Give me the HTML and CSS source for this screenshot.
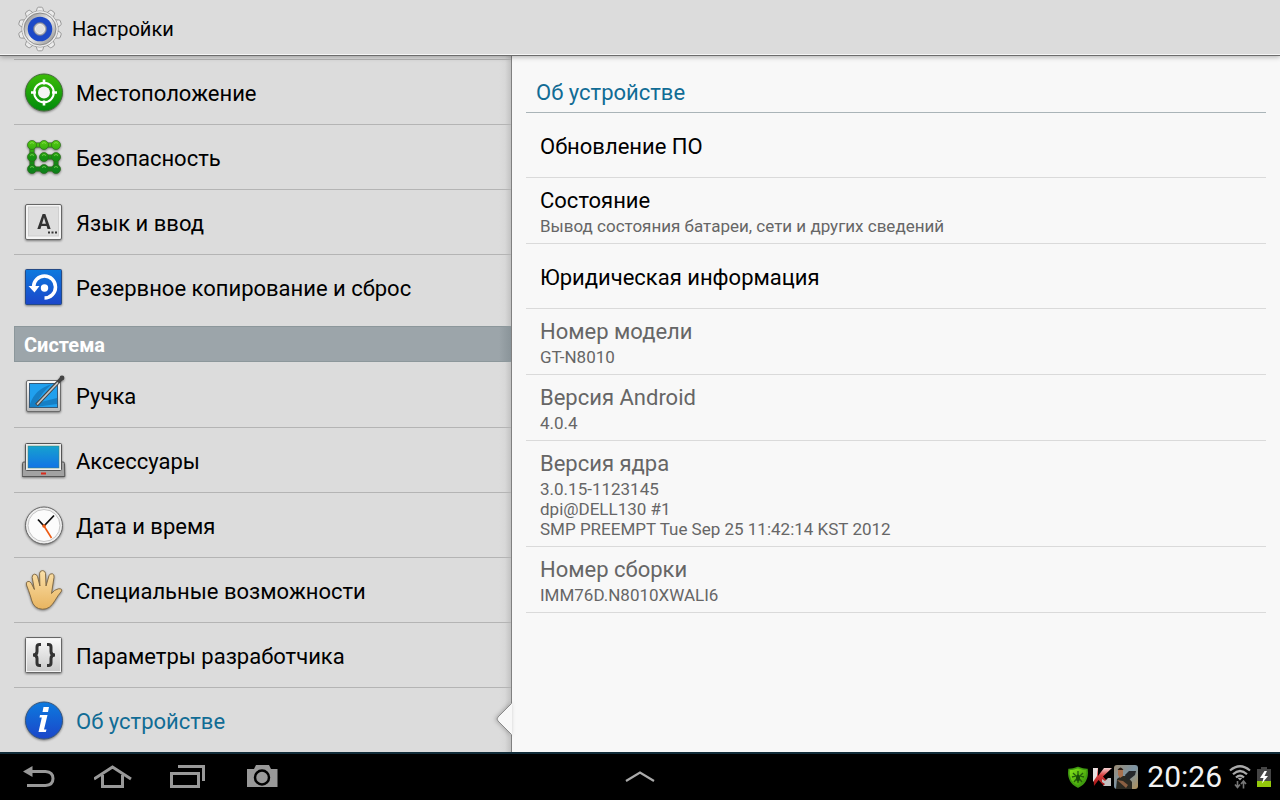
FILE: index.html
```html
<!DOCTYPE html>
<html lang="ru">
<head>
  <meta charset="UTF-8">
  <meta name="viewport" content="width=device-width, initial-scale=1">
  <title>Настройки</title>
  <link rel="stylesheet" href="styles.css">
</head>
<body>
  <svg class="defs" aria-hidden="true">
    <defs>
      <linearGradient id="metal" x1="0" y1="0" x2="0" y2="1"><stop offset="0" stop-color="#fbfbfb"/><stop offset="1" stop-color="#b9b9b9"/></linearGradient>
      <linearGradient id="silver" x1="0" y1="0" x2="1" y2="1"><stop offset="0" stop-color="#858585"/><stop offset=".5" stop-color="#ededed"/><stop offset="1" stop-color="#858585"/></linearGradient>
      <linearGradient id="green" x1="0" y1="0" x2="0" y2="1"><stop offset="0" stop-color="#3cbc08"/><stop offset="1" stop-color="#008a0c"/></linearGradient>
      <linearGradient id="greenDots" gradientUnits="userSpaceOnUse" x1="0" y1="5" x2="0" y2="38"><stop offset="0" stop-color="#55cc10"/><stop offset=".5" stop-color="#179312"/><stop offset="1" stop-color="#0c7f1c"/></linearGradient>
      <linearGradient id="blue" x1="0" y1="0" x2="0" y2="1"><stop offset="0" stop-color="#0d7ade"/><stop offset="1" stop-color="#1b46c9"/></linearGradient>
      <linearGradient id="screen" x1="0" y1="0" x2="0" y2="1"><stop offset="0" stop-color="#16a2cf"/><stop offset="1" stop-color="#1273e6"/></linearGradient>
      <linearGradient id="skin" x1="0" y1="0" x2="0" y2="1"><stop offset="0" stop-color="#fbe0a8"/><stop offset="1" stop-color="#e8b460"/></linearGradient>
      <linearGradient id="shield" x1="0" y1="0" x2="1" y2="1"><stop offset="0" stop-color="#8bea1c"/><stop offset="1" stop-color="#2b8a06"/></linearGradient>
      <linearGradient id="red" x1="0" y1="0" x2="0" y2="1"><stop offset="0" stop-color="#f6d5d5"/><stop offset=".4" stop-color="#d84040"/><stop offset="1" stop-color="#a01010"/></linearGradient>
      <linearGradient id="sky" x1="0" y1="0" x2="1" y2="1"><stop offset="0" stop-color="#9b8b73"/><stop offset=".5" stop-color="#7d95a5"/><stop offset="1" stop-color="#b09058"/></linearGradient>
    </defs>
  </svg>

  <header class="titlebar">
    <svg class="titlebar-icon" viewBox="0 0 48 48" aria-hidden="true">
      <g fill="#ebebeb" stroke="#8c8c8c" stroke-width=".8">
        <path id="tooth" d="M19.500 9L21 3.800Q21.300 2.200 22.600 2.200H25.400Q26.700 2.200 27 3.800L28.500 9z"/>
        <use href="#tooth" transform="rotate(36 24 24)"/><use href="#tooth" transform="rotate(72 24 24)"/>
        <use href="#tooth" transform="rotate(108 24 24)"/><use href="#tooth" transform="rotate(144 24 24)"/>
        <use href="#tooth" transform="rotate(180 24 24)"/><use href="#tooth" transform="rotate(216 24 24)"/>
        <use href="#tooth" transform="rotate(252 24 24)"/><use href="#tooth" transform="rotate(288 24 24)"/>
        <use href="#tooth" transform="rotate(324 24 24)"/>
        <circle cx="24" cy="24" r="18"/>
      </g>
      <circle cx="24" cy="24" r="17.700" fill="#ebebeb"/>
      <circle cx="24" cy="24" r="16" fill="url(#silver)" stroke="#7c7c7c" stroke-width=".8"/>
      <circle cx="24" cy="24" r="12.300" fill="#1c49c8"/>
      <circle cx="24" cy="24" r="6.500" fill="#b4b4b4" stroke="#5f6c98" stroke-width=".8"/>
      <circle cx="24" cy="24" r="4.600" fill="#e0e0e0" stroke="#f4f4f4" stroke-width=".8"/>
    </svg>
    <h1 class="titlebar-text">Настройки</h1>
  </header>

  <main class="panes">
    <nav class="sidebar">
      <ul class="menu">
        <li><a href="#location">
          <svg class="icon" viewBox="0 0 44 44" aria-hidden="true"><circle cx="22" cy="21.500" r="18.500" fill="url(#green)" stroke="#3f6b35"/><g fill="none" stroke="#fff"><circle cx="22" cy="21.500" r="9.800" stroke-width="2"/><path d="M22 8.500v5M22 29.500v5M9 21.500h5M30 21.500h5" stroke-width="2.600"/></g><circle cx="22" cy="21.500" r="6" fill="#f4f4f4"/></svg>
          Местоположение</a></li>
        <li><a href="#security">
          <svg class="icon" viewBox="0 0 44 44" aria-hidden="true"><path d="M34 9H10V33H34V21H22" fill="none" stroke="#2d6b1c" stroke-width="5"/><path d="M34 9H10V33H34V21H22" fill="none" stroke="url(#greenDots)" stroke-width="3.600"/><g fill="url(#greenDots)" stroke="#2d6b1c" stroke-width=".7"><circle cx="10" cy="9" r="4.500"/><circle cx="22" cy="9" r="4.500"/><circle cx="34" cy="9" r="4.500"/><circle cx="10" cy="21" r="4.500"/><circle cx="22" cy="21" r="4.500"/><circle cx="34" cy="21" r="4.500"/><circle cx="10" cy="33" r="4.500"/><circle cx="22" cy="33" r="4.500"/><circle cx="34" cy="33" r="4.500"/></g><path d="M8 7.500q2-2 4 0M20 7.500q2-2 4 0M32 7.500q2-2 4 0M8 19.500q2-2 4 0M20 19.500q2-2 4 0M32 19.500q2-2 4 0M8 31.500q2-2 4 0M20 31.500q2-2 4 0M32 31.500q2-2 4 0" fill="none" stroke="#8fe060" opacity=".7"/></svg>
          Безопасность</a></li>
        <li><a href="#language">
          <svg class="icon" viewBox="0 0 44 44" aria-hidden="true"><rect x="3.500" y="3.500" width="36" height="35" rx="1.500" fill="#f4f4f4" stroke="#666"/><rect x="6.500" y="6" width="30" height="29" fill="#dedede" stroke="#cfcfcf"/><text class="glyph" x="22" y="28">A</text><path d="M26 31.500h2M29.500 31.500h2M33 31.500h2" stroke="#333" stroke-width="2"/></svg>
          Язык и ввод</a></li>
        <li><a href="#backup">
          <svg class="icon" viewBox="0 0 44 44" aria-hidden="true"><rect x="3.500" y="3.500" width="36" height="35" rx="1" fill="url(#blue)" stroke="#244a86"/><path d="M11.500 21A11 11 0 1 1 22.500 32" fill="none" stroke="#fff" stroke-width="3.500"/><path d="M6.500 20h11l-5 6.500z" fill="#fff"/><circle cx="22.500" cy="22" r="3.700" fill="#fff"/></svg>
          Резервное копирование и сброс</a></li>
      </ul>
      <h2 class="category">Система</h2>
      <ul class="menu">
        <li><a href="#pen">
          <svg class="icon" viewBox="0 0 44 44" aria-hidden="true"><rect x="4.500" y="6.500" width="34" height="31" rx="1.500" fill="url(#metal)" stroke="#6b6b6b"/><rect x="7.500" y="9.500" width="28" height="24" fill="#20a0ee" stroke="#34597a"/><path d="M8 30Q13 15 30 10Q19 19 15 29l20-5v6l-22 3H8z" fill="#1270b4" opacity=".7"/><path d="M14.500 31L39 5" stroke="#444" stroke-width="3.800"/><path d="M15 30.500L36 8.500" stroke="#c7c7c7" stroke-width="1.800"/><circle cx="40" cy="4" r="2.400" fill="#444"/></svg>
          Ручка</a></li>
        <li><a href="#accessories">
          <svg class="icon" viewBox="0 0 44 44" aria-hidden="true"><path d="M.5 24.500Q.5 23 2 23H41Q42.500 23 42.500 24.500L42.800 37.500H.2z" fill="#a2a2a2" stroke="#555"/><rect x="3.500" y="4.500" width="36" height="27" rx="1" fill="#ececec" stroke="#555"/><rect x="6" y="7" width="31" height="22" fill="url(#screen)" stroke="#486" stroke-width=".5"/><path d="M19 34.500h5" stroke="#d82b1c" stroke-width="2"/></svg>
          Аксессуары</a></li>
        <li><a href="#datetime">
          <svg class="icon" viewBox="0 0 44 44" aria-hidden="true"><circle cx="22" cy="21.500" r="18.500" fill="#eee" stroke="#666"/><circle cx="22" cy="21.500" r="16" fill="#fcfcfc" stroke="#c5c5c5"/><path d="M16 15.500l6 6.500L32 11.500" fill="none" stroke="#111" stroke-width="1.800"/><path d="M22 22l7.500 12" stroke="#ee5b12" stroke-width="1.600"/><circle cx="22" cy="22" r="1.800" fill="#ee5b12"/></svg>
          Дата и время</a></li>
        <li><a href="#accessibility">
          <svg class="icon" viewBox="0 0 44 44" aria-hidden="true"><path d="M9.500 31Q9 28 4.500 16Q3.600 13 6 12.400Q8 12 9.400 14.500L12.400 20.500L10.200 8.500Q10 5.400 12.600 5.200Q14.800 5.200 15.600 7.800L17.900 17L17.600 4.200Q18 1.600 20.700 1.600Q23.200 1.800 23.500 4.400L24 17L27 6.700Q28 4.200 30.400 4.800Q32.600 5.600 32 8.300L29.500 24.500Q32.500 20.500 36.500 19.800Q40.500 19.500 39.600 22Q35.500 27 33 31.500Q28 40.500 20.500 40.200Q12 40 9.500 31z" fill="url(#skin)" stroke="#7c6440" stroke-width=".9"/></svg>
          Специальные возможности</a></li>
        <li><a href="#developer">
          <svg class="icon" viewBox="0 0 44 44" aria-hidden="true"><rect x="3.500" y="3.500" width="36" height="35" rx="1" fill="#f2f2f2" stroke="#666"/><rect x="5" y="5" width="33" height="32" fill="url(#metal)" opacity=".7"/><g fill="none" stroke="#333" stroke-width="3"><path d="M19 10.500H17.500Q15 10.500 15 13V17.500Q15 21 11 21Q15 21 15 24.500V29Q15 31.500 17.500 31.500H19"/><path d="M25 10.500H26.500Q29 10.500 29 13V17.500Q29 21 33 21Q29 21 29 24.500V29Q29 31.500 26.500 31.500H25"/></g></svg>
          Параметры разработчика</a></li>
        <li class="active"><a href="#about" aria-current="page">
          <svg class="icon" viewBox="0 0 44 44" aria-hidden="true"><circle cx="22" cy="21.500" r="18.500" fill="url(#blue)" stroke="#34557e"/><path d="M21.500 8h5.500l-1 5h-5.500zM18 16h7.500l-3.500 14.500h2.500l-.7 2.500h-7.300l3.300-14.500h-2.300z" fill="#fff"/></svg>
          Об устройстве</a>
          <svg class="pointer" viewBox="0 0 16 32" aria-hidden="true"><path d="M16 0L2 14Q0 16 2 18L16 32z" fill="#f8f8f8"/><path d="M15.500 .5L2 14Q0 16 2 18L15.500 31.500" fill="none" stroke="#8a8a8a"/></svg></li>
      </ul>
    </nav>

    <section class="details">
      <h2 class="details-title">Об устройстве</h2>
      <ul class="prefs">
        <li><a href="#update">Обновление ПО</a></li>
        <li class="two-line"><a href="#status">Состояние</a><p>Вывод состояния батареи, сети и других сведений</p></li>
        <li><a href="#legal">Юридическая информация</a></li>
        <li class="two-line disabled"><h3>Номер модели</h3><p>GT-N8010</p></li>
        <li class="two-line disabled"><h3>Версия Android</h3><p>4.0.4</p></li>
        <li class="two-line disabled"><h3>Версия ядра</h3><p>3.0.15-1123145<br>dpi@DELL130 #1<br>SMP PREEMPT Tue Sep 25 11:42:14 KST 2012</p></li>
        <li class="two-line disabled"><h3>Номер сборки</h3><p>IMM76D.N8010XWALI6</p></li>
      </ul>
    </section>
  </main>

  <footer class="navbar">
    <div class="nav-buttons">
      <button type="button" aria-label="Назад"><svg viewBox="0 0 40 28" aria-hidden="true"><path d="M8 8.500H25.500Q33 9 33 15.500T25.500 22.500H7" fill="none" stroke="#999" stroke-width="3"/><path d="M3 8.500L12.500 3v11z" fill="#999"/></svg></button>
      <button type="button" aria-label="Домой"><svg viewBox="0 0 40 28" aria-hidden="true"><path d="M0 16L18.500 4L37 16" fill="none" stroke="#999" stroke-width="3"/><path d="M8.500 12V23.500H28.500V12" fill="none" stroke="#999" stroke-width="3"/></svg></button>
      <button type="button" aria-label="Недавние приложения"><svg viewBox="0 0 40 28" aria-hidden="true"><path d="M3.500 10.500h27v13h-27zM10 3.500h25.500V18" fill="none" stroke="#999" stroke-width="3"/></svg></button>
      <button type="button" aria-label="Снимок экрана"><svg viewBox="0 0 40 28" aria-hidden="true"><path d="M5 6h7l2-4h13l2 4h6.500v18H5z" fill="#999"/><circle cx="20" cy="14.500" r="7" fill="none" stroke="#000" stroke-width="2.500"/></svg></button>
    </div>
    <button class="nav-up" type="button" aria-label="Мини-приложения"><svg viewBox="0 0 40 28" aria-hidden="true"><path d="M6 18L20 9.500L34 18" fill="none" stroke="#aaa" stroke-width="2.200"/></svg></button>
    <div class="status">
      <svg class="status-icon" viewBox="0 0 24 24" aria-hidden="true"><path d="M12 2.500Q17 4.500 21 4.500Q22.500 17 12 22Q1.500 17 3 4.500Q7 4.500 12 2.500z" fill="url(#shield)" stroke="#3f9a10" stroke-width="1.500"/><path d="M12 6v12M7 8l3 3-4 1M17 8l-3 3 4 1M8 17l2.500-3M16 17l-2.500-3" fill="none" stroke="#245f0a" stroke-width="1.300"/><ellipse cx="12" cy="13" rx="2" ry="3.500" fill="#184d06"/></svg>
      <svg class="status-icon" viewBox="0 0 24 24" aria-hidden="true"><path d="M3 3h5v8l6-8h8L13 11.500 17 16v5h-3L8.500 15 4 21z" fill="url(#red)"/><path d="M3 3h4v8l-4 6z" fill="#e9e1e1"/><path d="M12 14l3 2 3-3h3v8h-8l2-2-3-2z" fill="#c2c2c2"/></svg>
      <svg class="status-icon" viewBox="0 0 24 24" aria-hidden="true"><rect width="24" height="24" rx="3" fill="url(#sky)"/><path d="M2 24l1-10 4-3h6l5 6v7z" fill="#2b2a22"/><path d="M4 5q3-3 5 0v6l-3 2-2-3z" fill="#a8714e"/><path d="M3.500 5q3-5 6 0z" fill="#2b1c12"/><path d="M11 10l4-4h7l-1 4-5 4-3 2z" fill="#25282b"/><path d="M3 15l6 1 5 4-2 3z" fill="#8a5f42"/></svg>
      <time class="clock">20:26</time>
      <svg class="status-icon" viewBox="0 0 24 24" aria-hidden="true"><g fill="none" stroke="#aaa" stroke-width="2.200"><path d="M2 5.500Q12-3 22 5.500M5 9.200Q12 2.800 19 9.200M8 12.500Q12 8.700 16 12.500"/></g><path d="M12 15.500l-2.500-2.700h5z" fill="#aaa"/><path d="M9.500 16v6M7 19.500l2.500 3 2.500-3M15.500 23.500v-7M13 19l2.500-3 2.500 3" fill="none" stroke="#777" stroke-width="1.600"/></svg>
      <svg class="status-icon battery" viewBox="0 0 16 24" aria-hidden="true"><path d="M1 4h4V2h6v2h4v18H1z" fill="#454545"/><path d="M1 16h14v6H1z" fill="#94c90b"/><path d="M8.500 6L4 13h3.500L6 18.500 12 11H8.500L11 6z" fill="#fff"/></svg>
    </div>
  </footer>
</body>
</html>
```
FILE: styles.css
```css
* {
  box-sizing: border-box;
}
body {
  margin: 0;
  min-height: 100vh;
  display: flex;
  flex-direction: column;
  font-family: Roboto, "Noto Sans", sans-serif;
  font-size: 22px;
  color: #000;
  background: #dcdcdc;
}
h1, h2, h3, p, ul {
  margin: 0;
  padding: 0;
  font-weight: normal;
}
ul {
  list-style: none;
}
a {
  color: inherit;
  text-decoration: none;
}
.defs {
  position: absolute;
  width: 0;
  height: 0;
}

/* title bar */
.titlebar {
  position: relative;
  z-index: 2;
  display: flex;
  align-items: center;
  gap: 8px;
  height: 56px;
  padding: 2px 16px 0;
  border-bottom: 1px solid #6c6c6c;
  box-shadow: inset 0 -1px #f6f6f6, 0 1px 5px rgba(0, 0, 0, 0.3);
  background: #dcdcdc;
}
.titlebar-icon {
  width: 48px;
  height: 48px;
}
.titlebar-text {
  font-size: 20px;
}

/* two panes */
.panes {
  flex: 1;
  display: grid;
  grid-template-columns: 2fr 3fr;
}
.sidebar {
  padding: 3px 0 0 14px;
  border-right: 1px solid #808080;
  background: linear-gradient(to left, #c2c2c2, #d8d8d8 6px, #dcdcdc 12px);
}
.menu li {
  position: relative;
  height: 65px;
  border-top: 1px solid #b4b4b4;
}
.menu a {
  display: flex;
  align-items: center;
  gap: 10px;
  height: 100%;
  padding: 2px 8px 0;
}
.category + .menu li:first-child {
  border-top-color: transparent;
}
.icon {
  width: 44px;
  height: 44px;
  filter: drop-shadow(0 1px 1px rgba(0, 0, 0, 0.45));
}
.glyph {
  fill: #333;
  font-size: 20px;
  font-weight: bold;
  text-anchor: middle;
}
.category {
  margin-top: 7px;
  height: 36px;
  padding: 0 9px;
  border: 1px solid #8c979b;
  border-right: none;
  background: linear-gradient(to left, #8a9499, #9ca5aa 12px);
  color: #fff;
  font-size: 20px;
  font-weight: bold;
  line-height: 36px;
}
.active {
  color: #116c95;
}
.pointer {
  position: absolute;
  top: 15px;
  right: -1px;
  width: 16px;
  height: 32px;
  filter: drop-shadow(-1px 0 2px rgba(0, 0, 0, 0.25));
}

/* details */
.details {
  padding: 0 14px;
  background: #f8f8f8;
}
.details-title {
  height: 57px;
  padding: 16px 10px 0;
  border-bottom: 1px solid #aab4b8;
  color: #116c95;
  font-size: 22px;
  line-height: 42px;
}
.prefs li {
  height: 65px;
  padding: 0 14px;
  border-bottom: 1px solid #dadada;
  line-height: 68px;
}
.prefs .two-line {
  height: auto;
  padding: 9px 14px 7px;
  line-height: 28px;
}
.prefs .two-line a {
  display: block;
}
.prefs h3 {
  font-size: 22px;
}
.prefs p {
  margin-top: 1px;
  color: #666;
  font-size: 17px;
  line-height: 20px;
}
.disabled {
  color: #666;
}

/* bottom bar */
.navbar {
  display: grid;
  grid-template-columns: 1fr auto 1fr;
  align-items: center;
  height: 48px;
  padding: 0 8px;
  border-top: 2px solid #112c39;
  background: #000;
}
.navbar button {
  padding: 0;
  border: none;
  background: none;
}
.navbar button svg {
  display: block;
  width: 40px;
  height: 28px;
}
.nav-buttons {
  display: flex;
  gap: 34px;
  padding-left: 12px;
}
.status {
  display: flex;
  justify-content: flex-end;
  align-items: center;
}
.status-icon {
  width: 24px;
  height: 24px;
}
.clock {
  margin: 0 6px 0 9px;
  color: #f2f2f2;
  font-size: 30px;
  line-height: 46px;
}
.battery {
  width: 16px;
  margin-left: 4px;
}
```
